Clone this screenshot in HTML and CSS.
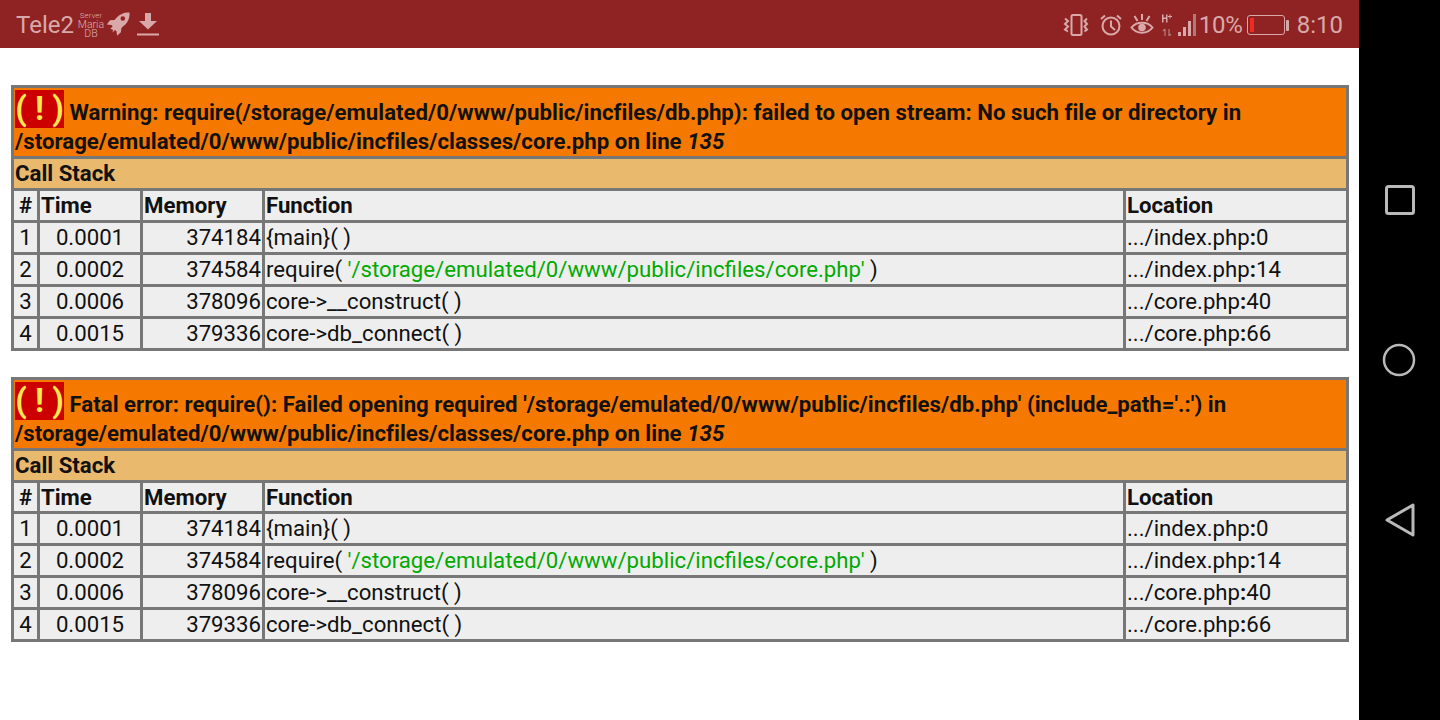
FILE: index.html
```html
<!DOCTYPE html>
<html lang="en">
<head>
<meta charset="utf-8">
<title>PHP error</title>
<link rel="stylesheet" href="styles.css">
</head>
<body>
<div class="screen">
  <div class="main">
    <header class="status">
      <div class="status-left">
        <span class="carrier">Tele2</span>
        <span class="server"><span class="s1">Server</span><span class="s2">Maria</span><span class="s2">DB</span></span>
        <svg class="ic-rocket" width="24" height="24" viewBox="0 0 24 24"><path fill="#d9a9a9" d="M23.500.5c-5.500-.4-9.500 1.500-13 5.300L8.600 7.900 4 8.300.8 12.500l4.700.4 1.200 1.600-2.500 2.300 2.800 1-.4 2.600 2.300-2.300 1.600 1.100.6 4.500 3.800-3.400.5-4.400 1.800-1.700C20.700 12.400 24 7 23.500.5zm-6.700 8.300a2.300 2.300 0 1 1 0-4.600 2.300 2.300 0 0 1 0 4.600z"/></svg>
        <svg class="ic-dl" width="24" height="24" viewBox="0 0 24 24"><path fill="#d9a9a9" d="M9 1h6v8h6l-9 8.500L3 9h6zM1 21.500h22v2H1z"/></svg>
      </div>
      <div class="status-right">
        <svg class="i-vib" width="28" height="22" viewBox="0 0 28 22" fill="none" stroke="#d9a9a9"><rect x="9.500" y="1" width="10" height="20" rx="1.500" stroke-width="2"/><path stroke-width="2" d="M3 4.500l3 2.500-3 3 3 2.500-3 3 3 2M25 4.500l-2.500 2.500 2.500 3-2.500 2.500 2.500 3-2.500 2"/></svg>
        <svg class="i-alarm" width="22" height="22" viewBox="0 0 22 22" fill="none" stroke="#d9a9a9" stroke-width="2"><circle cx="11" cy="12" r="8.500"/><path d="M11 6.500v6l4 3.500M1 5l4-3.500M21 5l-4-3.500"/></svg>
        <svg class="i-eye" width="24" height="22" viewBox="0 0 24 22" fill="none" stroke="#d9a9a9" stroke-width="2"><path d="M1.500 13.500c5-6.500 16-6.500 21 0-5 7-16 7-21 0z"/><circle cx="12" cy="13.500" r="3.800" fill="#d9a9a9" stroke="none"/><path d="M4.500 2l3 5M19.500 2l-3 5M12 0v6"/></svg>
        <svg class="i-sig" width="35" height="22" viewBox="0 0 35 22"><g fill="#d9a9a9"><rect x="16" y="18" width="3" height="4"/><rect x="21" y="13" width="3" height="9"/><rect x="26" y="7" width="3" height="15"/></g><rect x="31" y="0" width="3" height="22" fill="#b07a7a"/><path fill="#d9a9a9" d="M0 .5h1.500v3H4v-3h1.500v8H4V5H1.500v3.500H0zM7.500 .5h1V2H10v1H8.500v1.500h-1V3H6V2h1.500z"/><path stroke="#b07a7a" stroke-width="1.300" fill="none" d="M3 22v-7M1 17l2-2M7 15v7M9 20l-2 2"/></svg>
        <span class="pct">10%</span>
        <span class="battery"><span class="battery-level"></span></span><span class="battery-tip"></span>
        <span class="clock">8:10</span>
      </div>
    </header>
    <main class="content">
      <table class="xdebug">
        <colgroup><col class="c1"><col class="c2"><col class="c3"><col class="c4"><col class="c5"></colgroup>
        <tr><th colspan="5" class="err"><span class="bang">( ! )</span> Warning: require(/storage/emulated/0/www/public/incfiles/db.php): failed to open stream: No such file or directory in /storage/emulated/0/www/public/incfiles/classes/core.php on line <i>135</i></th></tr>
        <tr><th colspan="5" class="cs">Call Stack</th></tr>
        <tr class="hd"><th class="ctr">#</th><th>Time</th><th>Memory</th><th>Function</th><th>Location</th></tr>
        <tr><td class="ctr">1</td><td class="ctr">0.0001</td><td class="r">374184</td><td>{main}( )</td><td>.../index.php<b>:</b>0</td></tr>
        <tr><td class="ctr">2</td><td class="ctr">0.0002</td><td class="r">374584</td><td>require( <span class="str">'/storage/emulated/0/www/public/incfiles/core.php'</span> )</td><td>.../index.php<b>:</b>14</td></tr>
        <tr><td class="ctr">3</td><td class="ctr">0.0006</td><td class="r">378096</td><td>core-&gt;__construct( )</td><td>.../core.php<b>:</b>40</td></tr>
        <tr><td class="ctr">4</td><td class="ctr">0.0015</td><td class="r">379336</td><td>core-&gt;db_connect( )</td><td>.../core.php<b>:</b>66</td></tr>
      </table>
      <table class="xdebug second">
        <colgroup><col class="c1"><col class="c2"><col class="c3"><col class="c4"><col class="c5"></colgroup>
        <tr><th colspan="5" class="err"><span class="bang">( ! )</span> Fatal error: require(): Failed opening required '/storage/emulated/0/www/public/incfiles/db.php' (include_path='.:') in /storage/emulated/0/www/public/incfiles/classes/core.php on line <i>135</i></th></tr>
        <tr><th colspan="5" class="cs">Call Stack</th></tr>
        <tr class="hd"><th class="ctr">#</th><th>Time</th><th>Memory</th><th>Function</th><th>Location</th></tr>
        <tr><td class="ctr">1</td><td class="ctr">0.0001</td><td class="r">374184</td><td>{main}( )</td><td>.../index.php<b>:</b>0</td></tr>
        <tr><td class="ctr">2</td><td class="ctr">0.0002</td><td class="r">374584</td><td>require( <span class="str">'/storage/emulated/0/www/public/incfiles/core.php'</span> )</td><td>.../index.php<b>:</b>14</td></tr>
        <tr><td class="ctr">3</td><td class="ctr">0.0006</td><td class="r">378096</td><td>core-&gt;__construct( )</td><td>.../core.php<b>:</b>40</td></tr>
        <tr><td class="ctr">4</td><td class="ctr">0.0015</td><td class="r">379336</td><td>core-&gt;db_connect( )</td><td>.../core.php<b>:</b>66</td></tr>
      </table>
    </main>
  </div>
  <nav class="nav">
    <svg width="30" height="30" viewBox="0 0 30 30" fill="none" stroke="#b9b9b9" stroke-width="3"><rect x="1.500" y="1.500" width="27" height="27" rx="2"/></svg>
    <svg width="34" height="34" viewBox="0 0 34 34" fill="none" stroke="#b9b9b9" stroke-width="2.500"><circle cx="17" cy="17" r="15"/></svg>
    <svg width="30" height="34" viewBox="0 0 30 34" fill="none" stroke="#b9b9b9" stroke-width="3" stroke-linejoin="round"><path d="M28 2v30L2 17z"/></svg>
  </nav>
</div>
</body>
</html>
```
FILE: styles.css
```css
html, body { margin: 0; padding: 0; height: 720px; overflow: hidden; background: #fff; }
body { font-family: Roboto, "Liberation Sans", sans-serif; color: #111; }
.screen { display: flex; width: 1440px; height: 720px; }
.main { width: 1359px; flex: none; }
.nav { flex: 1; background: #000; display: flex; flex-direction: column; align-items: center; padding-top: 185px; }
.nav svg:nth-child(1) { margin-left: 1px; }
.nav svg:nth-child(2) { margin-top: 128px; margin-right: 1px; }
.nav svg:nth-child(3) { margin-top: 126px; }
.status { height: 48px; background: #8f2323; display: flex; justify-content: space-between; align-items: center; padding: 2px 16px 0; box-sizing: border-box; color: #d9a9a9; }
.status-left, .status-right { display: flex; align-items: center; }
.carrier { font-size: 24px; }
.server { display: flex; flex-direction: column; align-items: center; width: 26px; margin-left: 4px; font-weight: 300; color: #dcb0b0; }
.server .s1 { font-size: 8px; line-height: 8px; }
.server .s2 { font-size: 10.500px; line-height: 9.500px; }
.ic-rocket { margin-left: 2px; margin-top: -2px; }
.ic-dl { margin-left: 6px; margin-top: -2px; }
.status-right svg { margin-top: -1px; }
.i-vib { margin-right: 10px; }
.i-alarm { margin-right: 8px; }
.i-eye { margin-right: 8px; }
.i-sig { margin-right: 2px; }
.pct { font-size: 24px; letter-spacing: -0.2px; }
.battery { box-sizing: border-box; width: 38px; height: 20px; margin-left: 4px; border: 1.500px solid #d9a9a9; border-radius: 3px; padding: 2px; display: flex; }
.battery-level { width: 4px; background: #f02a22; }
.battery-tip { width: 3px; height: 11px; background: #d9a9a9; margin-left: 1px; border-radius: 1px; }
.clock { font-size: 24px; margin-left: 8px; }
.content { padding-top: 37px; padding-left: 11px; }
.xdebug { width: 1338px; table-layout: fixed; border-collapse: collapse; font-size: 22.2px; line-height: 29px; margin-bottom: 26px; }
.xdebug th, .xdebug td { border: 3px solid #777; padding: 0 1px; text-align: left; overflow: hidden; white-space: nowrap; }
.xdebug th, .xdebug b { font-weight: 700; }
.xdebug td, .hd th { background: #eee; }
.xdebug .err { background: #f57900; white-space: normal; line-height: 27px; letter-spacing: 0.02px; padding-top: 2px; padding-bottom: 1px; }
.xdebug .cs { background: #e9b96e; }
.xdebug .ctr { text-align: center; }
.xdebug .r { text-align: right; }
.second .hd th { line-height: 28px; }
.c1 { width: 26px; } .c2 { width: 103px; } .c3 { width: 122px; } .c4 { width: 861px; } .c5 { width: 223px; }
.bang { display: inline-block; background: #cc0000; color: #fce94f; font-size: 33px; line-height: 38px; width: 49px; text-align: center; white-space: nowrap; font-weight: 700; vertical-align: baseline; letter-spacing: 0; }
.str { color: #00aa00; }
```
